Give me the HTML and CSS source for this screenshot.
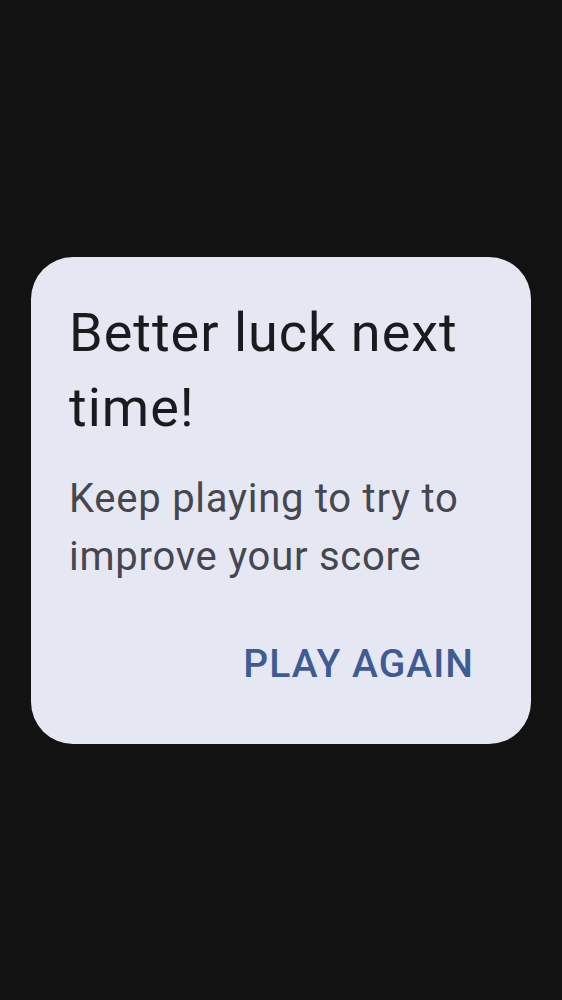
FILE: index.html
```html
<!DOCTYPE html>
<html>
<head>
<meta charset="utf-8">
<link rel="stylesheet" href="styles.css">
</head>
<body>
<div class="screen">
  <div class="dialog">
    <h1 class="title">Better luck next time!</h1>
    <p class="message">Keep playing to try to improve your score</p>
    <div class="actions">
      <button class="action">PLAY AGAIN</button>
    </div>
  </div>
</div>
</body>
</html>
```
FILE: styles.css
```css
html, body {
  margin: 0;
  padding: 0;
  background: #121212;
}
.screen {
  width: 562px;
  height: 1000px;
  display: flex;
  align-items: center;
  justify-content: center;
  font-family: Roboto, "Noto Sans", sans-serif;
}
.dialog {
  box-sizing: border-box;
  width: 500px;
  height: 487px;
  background: #e5e8f2;
  border-radius: 42px;
  padding: 38px 38px 0 38px;
  display: flex;
  flex-direction: column;
}
.title {
  margin: 0;
  font-size: 54px;
  line-height: 75px;
  font-weight: 400;
  letter-spacing: 1px;
  color: #1b1b1f;
}
.message {
  margin: 25px 0 0 0;
  font-size: 40px;
  line-height: 58px;
  font-weight: 400;
  letter-spacing: 0.75px;
  color: #45464f;
}
.actions {
  display: flex;
  justify-content: flex-end;
  margin-top: 49px;
}
.action {
  border: none;
  background: none;
  padding: 0 19px 0 0;
  margin: 0;
  font-family: Roboto, "Noto Sans", sans-serif;
  font-size: 39px;
  line-height: 58px;
  font-weight: 500;
  letter-spacing: 1.05px;
  color: #3f5b93;
}
```
